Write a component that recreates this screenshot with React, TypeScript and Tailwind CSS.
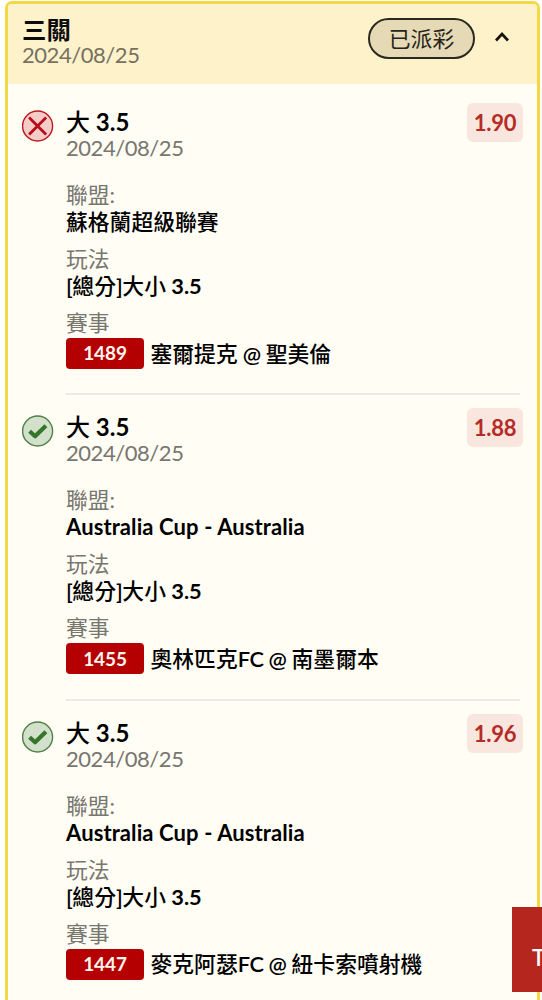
type Leg = {
  odds: string;
  won: boolean;
  league: string;
  code: string;
  match: string;
};

const legs: Leg[] = [
  { odds: '1.90', won: false, league: '蘇格蘭超級聯賽', code: '1489', match: '塞爾提克 @ 聖美倫' },
  { odds: '1.88', won: true, league: 'Australia Cup - Australia', code: '1455', match: '奧林匹克FC @ 南墨爾本' },
  { odds: '1.96', won: true, league: 'Australia Cup - Australia', code: '1447', match: '麥克阿瑟FC @ 紐卡索噴射機' },
];

// Latin runs are set bold and Chinese runs medium so both scripts have an even colour.
function Mixed({ text }: { text: string }) {
  return (
    <>
      {text.split(/([\u4e00-\u9fff]+)/).map((run, i) =>
        i % 2 ? (
          <span key={i} className="font-medium">{run}</span>
        ) : (
          <span key={i} className={run.includes('@') || run.includes('[') || run === ']' ? 'font-semibold tracking-[-0.4px]' : 'font-bold'}>{run}</span>
        ),
      )}
    </>
  );
}

function StatusIcon({ won }: { won: boolean }) {
  return won ? (
    <svg viewBox="0 0 32 32" className="h-8 w-8" fill="none">
      <circle cx="15.6" cy="16" r="15" fill="#d3e0cb" stroke="#4f8147" strokeWidth="1.4" />
      <path d="M7.6 16.2 13.1 21.2 23.9 10.8" stroke="#34762a" strokeWidth="4.2" strokeLinejoin="round" />
    </svg>
  ) : (
    <svg viewBox="0 0 32 32" className="h-8 w-8" fill="none">
      <circle cx="15.6" cy="16" r="15" fill="#f5cdc8" stroke="#bd1820" strokeWidth="1.4" />
      <path d="M7.1 7.5 24.1 24.5M24.1 7.5 7.1 24.5" stroke="#b80d18" strokeWidth="2.8" />
    </svg>
  );
}

function Field({ label, value }: { label: string; value: string }) {
  const latin = /^[\x20-\x7e]+$/.test(value);
  return (
    <div className="mb-[11px] text-[21.8px]">
      <div className="h-[26px] leading-[26px] text-[#77766f]">{label}</div>
      <div className={latin ? 'h-[27px] text-[22px] leading-[28px] tracking-[0.1px] text-black' : 'h-[27px] leading-[28px] text-black'}>
        <Mixed text={value} />
      </div>
    </div>
  );
}

function LegRow({ leg, last }: { leg: Leg; last: boolean }) {
  return (
    <div className="flex h-[305.3px] shrink-0 pl-[14px]">
      <div className="w-[44px] shrink-0 pt-[20px]">
        <StatusIcon won={leg.won} />
      </div>
      <div className={`mr-[17px] h-[305.3px] flex-1 pt-[18px] ${last ? '' : 'border-b-2 border-[#eceae3]'}`}>
        <div className="flex justify-between">
          <div>
            <div className="h-[27px] text-[24px] leading-[27px] text-black"><Mixed text="大 3.5" /></div>
            <div className="h-[26px] text-[22px] leading-[26px] tracking-[-0.45px] text-[#77766f]">2024/08/25</div>
          </div>
          <div className="-mt-[5px] -mr-[3px] flex h-[39px] w-[56px] items-center justify-center rounded-[6px] bg-[#f8e6df] text-[22px] font-bold tracking-[-0.2px] text-[#b52b25]">
            {leg.odds}
          </div>
        </div>
        <div className="pt-[21px]">
          <Field label="聯盟:" value={leg.league} />
          <Field label="玩法" value="[總分]大小 3.5" />
          <div className="h-[28px] text-[21.8px] leading-[26px] text-[#77766f]">賽事</div>
          <div className="flex h-[31px] items-center whitespace-nowrap">
            <span className="mr-[6.5px] flex h-[31px] w-[78px] items-center justify-center rounded-[4px] bg-[#b40000] text-[19px] font-bold tracking-[-0.1px] text-[#fff6ee]">
              {leg.code}
            </span>
            <span className="text-[21.8px] leading-[32px] text-black"><Mixed text={leg.match} /></span>
          </div>
        </div>
      </div>
    </div>
  );
}

export default function App() {
  return (
    <div
      lang="zh-Hant"
      className="relative h-[1000px] w-[542px] overflow-hidden bg-white pt-px pl-[5px] font-['Lato','Noto_Sans_CJK_TC',sans-serif]"
    >
      <div className="h-[1100px] w-[535px] overflow-hidden rounded-t-[7px] border-[3px] border-[#f2d944] bg-[#fffdf4]">
        <header className="flex h-[80px] bg-[#fef2cb] pl-[14px]">
          <div className="flex-1 pt-[12px]">
            <div className="h-[26px] text-[24.4px] leading-[27px] font-bold text-[#0b0b0b]">三關</div>
            <div className="h-[26px] text-[22px] leading-[26px] tracking-[-0.45px] text-[#77705f]">2024/08/25</div>
          </div>
          <div className="mt-[14px] flex h-[41px] w-[107px] items-center justify-center rounded-full border-2 border-[#2b281f] bg-[#e5dab5] pt-px text-[21.8px] text-[#27241b]">
            已派彩
          </div>
          <svg viewBox="0 0 14 10" className="mt-[28px] mr-[28px] ml-[20px] h-[10px] w-[14px]" fill="none">
            <path d="M1 8.5 7 2 13 8.5" stroke="#17150f" strokeWidth="2.7" />
          </svg>
        </header>
        <main className="flex flex-col pt-[6px]">
          {legs.map((leg, i) => (
            <LegRow key={leg.code} leg={leg} last={i === legs.length - 1} />
          ))}
        </main>
      </div>
      <button className="absolute top-[907px] left-[512px] h-[85px] w-[90px] bg-[#b5261e] pt-[16px] pl-[20px] text-left text-[22px] font-semibold text-white">
        T
      </button>
    </div>
  );
}
